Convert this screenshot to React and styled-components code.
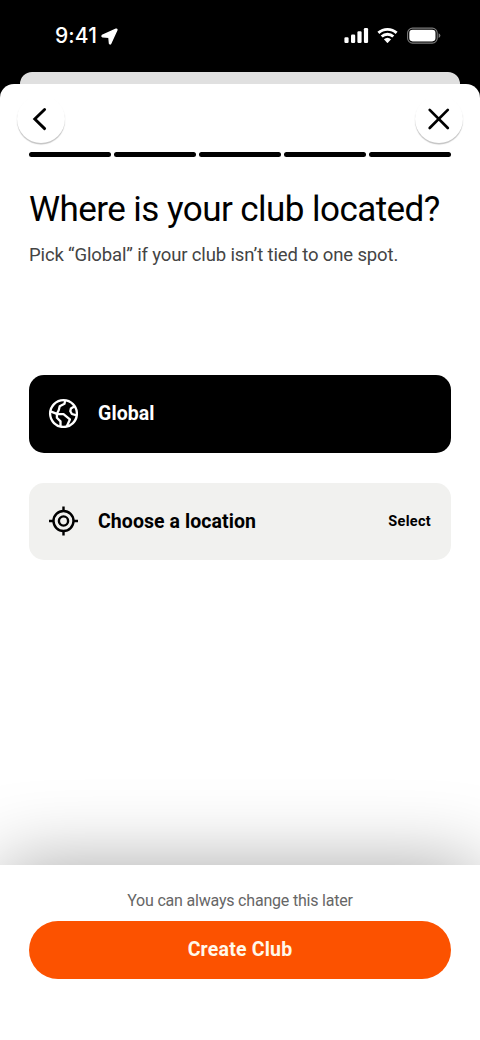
import React from 'react'
import styled, { createGlobalStyle } from 'styled-components'

const steps = [1, 2, 3, 4, 5]

const App = () => {
    return (
        <Screen>
            <GlobalStyle />
            <StatusBar>
                <Clock>
                    9:41
                    <LocationArrow />
                </Clock>
                <StatusIcons />
            </StatusBar>
            <BackSheet />
            <Sheet>
                <NavRow>
                    <RoundButton aria-label="Back">
                        <svg width="48" height="48" viewBox="0 0 48 48" fill="none" stroke="#000" strokeWidth="2.9" strokeLinecap="round" strokeLinejoin="miter">
                            <path d="M27.6 14.5 L17.8 24 L27.6 33.6" />
                        </svg>
                    </RoundButton>
                    <RoundButton aria-label="Close">
                        <svg width="48" height="48" viewBox="0 0 48 48" fill="none" stroke="#000" strokeWidth="2.7" strokeLinecap="round">
                            <path d="M14.7 14.9 L32.8 33 M32.8 14.9 L14.7 33" />
                        </svg>
                    </RoundButton>
                </NavRow>
                <Progress>
                    {steps.map((step) => <Step key={step} />)}
                </Progress>
                <Title>Where is your club located?</Title>
                <Subtitle>Pick “Global” if your club isn’t tied to one spot.</Subtitle>
                <Options>
                    <Option $active>
                        <GlobeIcon />
                        <OptionLabel $spacing="0.1px">Global</OptionLabel>
                    </Option>
                    <Option>
                        <TargetIcon />
                        <OptionLabel $spacing="0.07px">Choose a location</OptionLabel>
                        <Select>Select</Select>
                    </Option>
                </Options>
                <Footer>
                    <Hint>You can always change this later</Hint>
                    <CreateButton>Create Club</CreateButton>
                </Footer>
            </Sheet>
        </Screen>
    )
}

const LocationArrow = () => (
    <svg width="17" height="17" viewBox="0 0 17 17">
        <path d="M15 1.2 L1.2 7.5 Q0.6 8.5 1.6 8.7 L7.9 9.2 L8.5 15.5 Q9 16.4 9.7 15.5 L15.9 2 Q16 0.8 15 1.2 Z" fill="#fff" stroke="#fff" strokeWidth="1.4" strokeLinejoin="round" />
    </svg>
)

const StatusIcons = () => (
    <svg width="98" height="18" viewBox="0 0 98 18" fill="#fff">
        <rect x="0.4" y="10.3" width="4.2" height="5.7" rx="1.2" />
        <rect x="7" y="7.5" width="4.2" height="8.5" rx="1.2" />
        <rect x="13.4" y="4.2" width="4.2" height="11.8" rx="1.2" />
        <rect x="19.9" y="1" width="4.2" height="15" rx="1.2" />
        <g fill="none" stroke="#fff" strokeWidth="2.9">
            <path d="M34.4 5.9 A13.4 13.4 0 0 1 52.6 5.9" />
            <path d="M37.7 9.5 A8.5 8.5 0 0 1 49.3 9.5" />
        </g>
        <path d="M39.9 12.2 Q43.5 9.2 47.1 12.2 L43.9 15.7 Q43.5 16.1 43.1 15.7 Z" />
        <rect x="63.6" y="1.1" width="29.6" height="15" rx="4.9" fill="none" stroke="#7b7b7b" strokeWidth="1.1" />
        <rect x="65.3" y="2.8" width="26.2" height="11.6" rx="3.3" />
        <path d="M94.6 6.3 Q96.4 7 96.4 8.6 Q96.4 10.2 94.6 10.9 Z" fill="#7b7b7b" />
    </svg>
)

const GlobeIcon = () => (
    <svg width="30" height="30" viewBox="-0.5 -0.6 30 30" fill="none" stroke="#fff" strokeWidth="2.3" strokeLinejoin="round">
        <circle cx="15" cy="15" r="13.4" />
        <path d="M16.6 2 L16 5.2 L11.2 7.6 L10.2 11.6 L8.4 15.2 L2 12.8" />
        <path d="M8.4 15.6 L15 15.6 L21.4 20.8 L18.2 27.8" />
        <path d="M8.4 15.4 L8.4 19.2 L12 22.8 L12 28" />
        <path d="M26.2 7.6 L22.4 9.8 L21.8 12.6 L23.4 15.4 L28.2 16.8" />
    </svg>
)

const TargetIcon = () => (
    <svg width="30" height="30" viewBox="-0.5 0 30 30" fill="none" stroke="#000" strokeWidth="2.4">
        <circle cx="15" cy="15" r="10" />
        <circle cx="15" cy="15" r="4.6" />
        <path d="M15 0.5 V5 M15 25 V29.5 M0.5 15 H5 M25 15 H29.5" />
    </svg>
)

const GlobalStyle = createGlobalStyle`
    * {
        box-sizing: border-box;
    }
    body {
        margin: 0;
        background: #000;
    }
    button {
        border: none;
        padding: 0;
        font-family: inherit;
    }
    svg {
        display: block;
        flex-shrink: 0;
    }
`
const Screen = styled.div`
    width: 480px;
    height: 1040px;
    display: flex;
    flex-direction: column;
    overflow: hidden;
    background: #000;
    font-family: Roboto, "Liberation Sans", sans-serif;
    white-space: nowrap;
`
const StatusBar = styled.div`
    height: 72px;
    display: flex;
    justify-content: space-between;
    align-items: center;
    padding: 0 38px 0 55px;
`
const Clock = styled.div`
    display: flex;
    align-items: center;
    gap: 4px;
    color: #fff;
    font-family: Inter, sans-serif;
    font-size: 21px;
    font-weight: 500;
    letter-spacing: 0.1px;
    line-height: 24px;
`
const BackSheet = styled.div`
    height: 12px;
    margin: 0 20px;
    border-radius: 12px 12px 0 0;
    background: #e0e0e0;
`
const Sheet = styled.main`
    flex: 1;
    display: flex;
    flex-direction: column;
    border-radius: 14px 14px 0 0;
    background: #fff;
`
const NavRow = styled.div`
    display: flex;
    justify-content: space-between;
    padding: 11px 17px 0;
`
const RoundButton = styled.button`
    width: 48px;
    height: 48px;
    border-radius: 50%;
    background: #fff;
    box-shadow: 0 1.5px 1px rgba(0, 0, 0, 0.24);
`
const Progress = styled.div`
    display: flex;
    gap: 2.4px;
    padding: 9px 29px 0;
`
const Step = styled.div`
    flex: 1;
    height: 5px;
    border-radius: 3px;
    background: #000;
`
const Title = styled.h1`
    margin: 32px 0 0 29px;
    font-size: 35px;
    line-height: 42px;
    font-weight: 400;
    letter-spacing: -0.55px;
    color: #000;
`
const Subtitle = styled.p`
    margin: 12px 0 0 29px;
    font-size: 18.5px;
    line-height: 24px;
    letter-spacing: -0.14px;
    color: #444;
`
const Options = styled.div`
    display: flex;
    flex-direction: column;
    gap: 30px;
    padding: 108px 29px 0;
`
const Option = styled.div`
    height: 77.7px;
    display: flex;
    align-items: center;
    padding: 0 20px 1px 19px;
    border-radius: 15px;
    background: ${({ $active }) => $active ? '#000' : '#f1f1ef'};
    color: ${({ $active }) => $active ? '#fff' : '#000'};
`
const OptionLabel = styled.span`
    margin-left: 20px;
    padding-top: 1px;
    font-size: 19.5px;
    font-weight: 700;
    letter-spacing: ${({ $spacing }) => $spacing};
`
const Select = styled.span`
    margin-left: auto;
    padding-top: 1px;
    font-size: 14.5px;
    font-weight: 700;
    letter-spacing: 0.3px;
`
const Footer = styled.footer`
    height: 175px;
    margin-top: auto;
    display: flex;
    flex-direction: column;
    padding: 26px 29px 0;
    background: #fff;
    box-shadow: 0 0 78px rgba(0, 0, 0, 0.34);
`
const Hint = styled.p`
    margin: 0;
    font-size: 16px;
    line-height: 20px;
    letter-spacing: -0.2px;
    text-align: center;
    color: #666;
`
const CreateButton = styled.button`
    height: 58px;
    margin-top: 9.5px;
    border-radius: 29px;
    background: #fc5200;
    color: #fff8ea;
    font-size: 19.5px;
    font-weight: 700;
    letter-spacing: 0.2px;
`

export default App
